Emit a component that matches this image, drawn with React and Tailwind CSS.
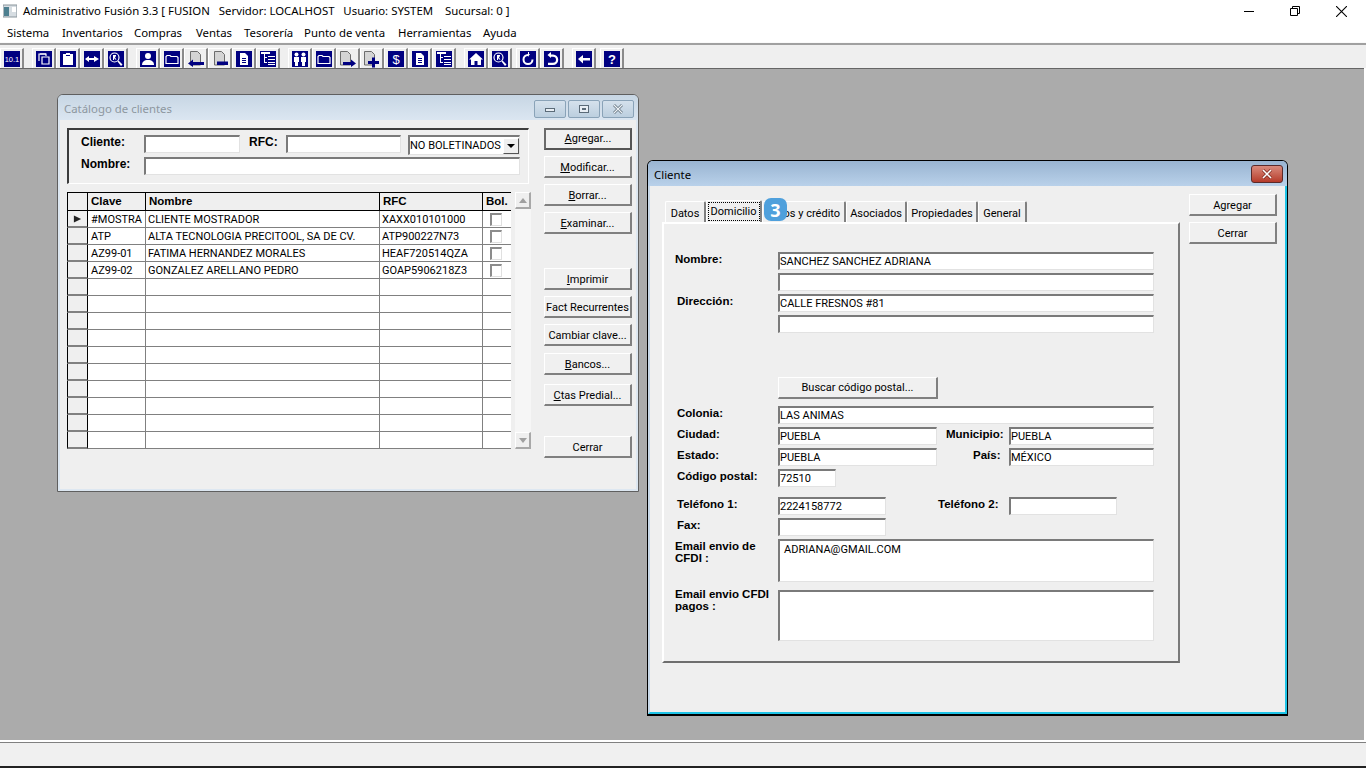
import React from "react";

const ui = "font-['Noto_Sans',sans-serif] text-[11.4px]";
const tah = "font-['Roboto',sans-serif] text-[11px] text-black";

const P = ({ children }) => (
  <svg viewBox="0 0 16 16" className="w-full h-full block overflow-visible">{children}</svg>
);
const S = { fill: "none", stroke: "#fff", strokeWidth: 1.2 };
const W = { fill: "#fff" };
const PG = { fill: "#d4d4d4", stroke: "#6c6c6c", strokeWidth: 1 };

const glyphs = {
  ten: <text x="8" y="11" textAnchor="middle" fontSize="7.500" fontFamily="Liberation Sans" fill="#fff">10.1</text>,
  copy: <P><path {...S} d="M3 10V3h7v2M6 6h7v7H6z" /><path {...S} d="M4 3h6" /></P>,
  clip: <P><path {...W} d="M3 3h3V2h4v1h3v11H3z" /><path fill="#000080" d="M6 4h4v1H6z" /></P>,
  arrows: <P><path {...W} d="M1 8l4-3v2h5V5l5 3-5 3V9H5v2z" /></P>,
  search: <P><circle {...S} cx="6.500" cy="6.500" r="4.500" /><path {...W} d="M5 4h3v1l-1 1.500 1.500 2H7L6 7v2H5zM9.500 10.500l1-1 4 4-1.500 1.500z" /></P>,
  person: <P><circle {...W} cx="8" cy="5" r="3" /><path {...W} d="M2 14c0-3 2-5 6-5s6 2 6 5z" /></P>,
  folder: <P><path {...S} d="M2 12.500V5.500l1-1h3l1 1h6l1 1v6z" /></P>,
  docL: <P><path {...PG} d="M2.500.500h7l3 3V14h-10z" /><path fill="#000080" d="M0 12.500l5-4v2.500h11v3H5V16z" /></P>,
  docM: <P><path {...PG} d="M2.500.500h7l3 3V14h-10z" /><path fill="#000080" d="M5 10.500h11v3.500H5z" /></P>,
  docR: <P><path {...PG} d="M.5.500h7l3 3V14H.5z" /><path fill="#000080" d="M16 12.500l-5-4v2.500H3v3h8V16z" /></P>,
  docP: <P><path {...PG} d="M.5.500h7l3 3V14H.5z" /><path fill="#000080" d="M8 6.500h3V10h4v3h-4v3.500H8V13H4v-3h4z" /></P>,
  doc: <P><path {...W} d="M4 2h5l3 3v9H4z" /><path fill="#000080" d="M6 7h4v1H6zM6 9h4v1H6zM6 11h4v1H6z" /></P>,
  list: <P><path {...W} d="M1 1h9v2H1zM4 3h1v9H4zM5 6h2v1H5zM5 11h2v1H5zM8 5h7v1H8zM8 8h7v1H8zM8 11h7v1H8zM8 13h7v1H8z" /></P>,
  people: <P><circle {...W} cx="4.500" cy="3.500" r="2" /><circle {...W} cx="11.500" cy="3.500" r="2" /><path {...W} d="M2 6h5v5H6v4H3v-4H2zM9 6h5v5h-1v4h-3v-4H9z" /></P>,
  dollar: <text x="8" y="13" textAnchor="middle" fontSize="13" fontFamily="Liberation Sans" fill="#fff">$</text>,
  home: <P><path {...W} d="M8 2l7 6.500h-2V14H9.500v-4h-3v4H3V8.500H1z" /></P>,
  redo: <P><path {...W} d="M8 1l1 0v2h1L8 6V5a3.500 3.500 0 1 0 3.500 3.500H13.500A5.500 5.500 0 1 1 8 3z" /></P>,
  undo: <P><path {...W} d="M7 1v6L3.500 4zM7 3.500h2a5 5 0 0 1 0 10.500H4v-2.200h5a2.900 2.900 0 0 0 0-6H7z" /></P>,
  back: <P><path {...W} d="M2 8l5-4v3h7v2.500H7v3z" /></P>,
  help: <text x="8" y="13" textAnchor="middle" fontSize="13" fontWeight="700" fontFamily="Liberation Sans" fill="#fff">?</text>,
};

const wrapSvg = (k) =>
  k === "ten" || k === "dollar" || k === "help" ? (
    <svg viewBox="0 0 16 16" className="w-full h-full block">{glyphs[k]}</svg>
  ) : (
    glyphs[k]
  );

const light = new Set(["docL", "docM", "docR", "docP"]);

function Tool({ k }) {
  return (
    <div className="w-6 h-[22px] flex items-center justify-center bg-[#efefef] border-t border-l border-white border-r-2 border-b-2 border-r-[#8a8a8a] border-b-[#8a8a8a]">
      <div className={`w-[16px] h-[16px] ${light.has(k) ? "" : "bg-[#000080]"}`}>{wrapSvg(k)}</div>
    </div>
  );
}

const toolbar = [
  ["ten"],
  ["copy", "clip", "arrows", "search"],
  ["person", "folder", "docL", "docM", "doc", "list"],
  ["people", "folder", "docR", "docP", "dollar", "doc", "list"],
  ["home", "search"],
  ["redo", "undo"],
  ["back"],
  ["help"],
];
const gaps = ["", "ml-2", "ml-2", "ml-2", "ml-2", "ml-1", "ml-2", "ml-1"];

const menus = [
  ["Sistema", "w-[55px]"],
  ["Inventarios", "w-[72px]"],
  ["Compras", "w-[62px]"],
  ["Ventas", "w-[48px]"],
  ["Tesorería", "w-[60px]"],
  ["Punto de venta", "w-[94px]"],
  ["Herramientas", "w-[85px]"],
  ["Ayuda", "w-[40px]"],
];

function Btn({ children, cls = "", def = false }) {
  const frame = def
    ? "border-2 border-t-[#6a6a6a] border-l-[#6a6a6a] border-r-[#555] border-b-[#555]"
    : "border-t border-l border-white border-r-2 border-b-2 border-r-[#808080] border-b-[#808080] pt-[3px]";
  return (
    <div className={`w-[88px] h-[22px] shrink-0 flex items-center justify-center bg-[#f0f0f0] ${frame} ${tah} ${cls}`}>
      {children}
    </div>
  );
}

function Field({ w, h = "h-[18px]", children, cls = "" }) {
  return (
    <div className={`${w} ${h} shrink-0 bg-white border-t-2 border-l-2 border-[#7a7a7a] border-r border-b border-r-[#e2e2e2] border-b-[#e2e2e2] overflow-hidden whitespace-nowrap ${tah} leading-[16px] ${cls}`}>
      {children}
    </div>
  );
}

const B = ({ children, cls = "" }) => (
  <div className={`font-['Liberation_Sans',sans-serif] font-bold text-[11.5px] text-black leading-[12px] ${cls}`}>{children}</div>
);

const rows = [
  ["#MOSTRA", "CLIENTE MOSTRADOR", "XAXX010101000"],
  ["ATP", "ALTA TECNOLOGIA PRECITOOL, SA DE CV.", "ATP900227N73"],
  ["AZ99-01", "FATIMA HERNANDEZ MORALES", "HEAF720514QZA"],
  ["AZ99-02", "GONZALEZ ARELLANO PEDRO", "GOAP5906218Z3"],
  ...Array(10).fill(["", "", ""]),
];

function Grid() {
  const hcell = "h-[19px] border-t border-black border-b bg-[#efefef] pl-[3px] font-['Liberation_Sans',sans-serif] font-bold text-[11.5px] leading-[17px] text-black";
  const cell = `bg-white border-r border-b border-[#808080] pt-px leading-[15px] overflow-hidden whitespace-nowrap ${tah}`;
  return (
    <div className="w-[444px] h-[257px] overflow-hidden">
      <div className="flex">
        <div className={`${hcell} w-[21px] border-l border-r`} />
        <div className={`${hcell} w-[58px] border-r`}>Clave</div>
        <div className={`${hcell} w-[234px] border-r`}>Nombre</div>
        <div className={`${hcell} w-[103px] border-r`}>RFC</div>
        <div className={`${hcell} w-[28px]`}>Bol.</div>
      </div>
      {rows.map((r, i) => (
        <div key={i} className="flex h-[17px]">
          <div className="w-[21px] h-[17px] bg-[#efefef] border-l border-l-black border-r border-r-black border-b-2 border-b-[#808080] flex items-center justify-center">
            {i === 0 && (
              <svg viewBox="0 0 10 8" className="w-[9px] h-[8px]"><path d="M1 0l8 4-8 4z" fill="#222" /></svg>
            )}
          </div>
          <div className={`w-[58px] pl-[3px] ${cell}`}>{r[0]}</div>
          <div className={`w-[234px] pl-[2px] ${cell}`}>{r[1]}</div>
          <div className={`w-[103px] pl-[2px] ${cell}`}>{r[2]}</div>
          <div className="w-[28px] bg-white border-b border-[#808080] flex items-center pl-[7px]">
            {r[0] && <div className="w-[12px] h-[13px] bg-white border-t-2 border-l-2 border-[#8c8c8c] border-r border-b border-r-[#e0e0e0] border-b-[#e0e0e0]" />}
          </div>
        </div>
      ))}
    </div>
  );
}

function Scroll() {
  const b = "w-[16px] h-[17px] bg-[#efefef] border-t border-l border-white border-r-2 border-b-2 border-r-[#a8a8a8] border-b-[#a8a8a8] flex items-center justify-center";
  return (
    <div className="ml-[4px] w-[16px] h-[257px] flex flex-col bg-[#f6f6f6]">
      <div className={b}><svg viewBox="0 0 8 5" className="w-[8px] h-[5px]"><path d="M4 0l4 5H0z" fill="#a0a0a0" /></svg></div>
      <div className="flex-1" />
      <div className={b}><svg viewBox="0 0 8 5" className="w-[8px] h-[5px]"><path d="M4 5l4-5H0z" fill="#a0a0a0" /></svg></div>
    </div>
  );
}

const Ul = ({ children }) => <span className="underline">{children}</span>;

function Catalogo() {
  return (
    <div className="absolute left-[57px] top-[25px] w-[582px] h-[398px] rounded-t-[6px] border border-[#5f5f5f] bg-[#dde7f1] flex flex-col">
      <div className="h-[25px] shrink-0 rounded-t-[5px] bg-gradient-to-b from-[#c7d6e4] to-[#dbe6f1] flex items-center pl-[6px] pr-[4px]">
        <div className={`${ui} mt-[2px] text-[#8d979f]`}>Catálogo de clientes</div>
        <div className="ml-auto flex gap-[2px] mt-[2px]">
          {["min", "max", "x"].map((k) => (
            <div key={k} className="w-[32px] h-[18px] rounded-[2px] border border-[#8aa3b8] bg-gradient-to-b from-[#d5e1ec] to-[#bccfdf] flex items-center justify-center">
              {k === "min" && <div className="w-[10px] h-[4px] mt-[3px] bg-[#e8eef4] border border-[#5b6b78]" />}
              {k === "max" && <div className="w-[10px] h-[8px] bg-[#e8eef4] border border-[#5b6b78] flex items-center justify-center"><div className="w-[4px] h-[2px] border border-[#5b6b78]" /></div>}
              {k === "x" && <svg viewBox="0 0 12 10" className="w-[12px] h-[10px]"><path d="M2 1l8 8M10 1l-8 8" stroke="#5b6b78" strokeWidth="2.600" /><path d="M2 1l8 8M10 1l-8 8" stroke="#eef3f7" strokeWidth="1.200" /></svg>}
            </div>
          ))}
        </div>
      </div>
      <div className="flex-1 mx-[2px] mb-[2px] bg-[#efefef] pt-[8px] pl-[7px] flex">
        <div className="w-[464px] shrink-0">
          <div className="w-[462px] h-[56px] border-t-2 border-l-2 border-[#3c3c3c] border-r border-b border-r-[#fff] border-b-[#fff]">
            <div className="flex items-start pt-[5px]">
              <B cls="ml-[12px] w-[63px] pt-[1px] !text-[12px]">Cliente:</B>
              <Field w="w-[96px]" />
              <B cls="ml-[9px] w-[37px] pt-[1px] !text-[12px]">RFC:</B>
              <Field w="w-[115px]" />
              <div className={`ml-[7px] w-[112px] h-[20px] bg-white border-t-2 border-l-2 border-[#7a7a7a] border-r border-b border-r-[#e2e2e2] border-b-[#e2e2e2] flex items-center ${tah} overflow-hidden`}>
                <span className="whitespace-nowrap pt-px">NO BOLETINADOS</span>
                <div className="ml-auto w-[16px] h-[16px] shrink-0 bg-[#efefef] border-t border-l border-white border-r border-b border-r-[#555] border-b-[#555] flex items-center justify-center">
                  <svg viewBox="0 0 8 4" className="w-[8px] h-[4px]"><path d="M0 0h8L4 4z" fill="#000" /></svg>
                </div>
              </div>
            </div>
            <div className="flex items-start mt-[2px]">
              <B cls="ml-[12px] w-[63px] pt-[1px] !text-[12px]">Nombre:</B>
              <Field w="w-[376px]" />
            </div>
          </div>
          <div className="mt-[8px] flex w-[470px]">
            <Grid />
            <Scroll />
          </div>
        </div>
        <div className="ml-[13px] flex flex-col">
          <Btn def><Ul>A</Ul>gregar...</Btn>
          <Btn cls="mt-[6px]"><Ul>M</Ul>odificar...</Btn>
          <Btn cls="mt-[6px]"><Ul>B</Ul>orrar...</Btn>
          <Btn cls="mt-[6px]"><Ul>E</Ul>xaminar...</Btn>
          <Btn cls="mt-[34px]"><Ul>I</Ul>mprimir</Btn>
          <Btn cls="mt-[6px]">Fact Recurrentes</Btn>
          <Btn cls="mt-[6px]">Cambiar clave...</Btn>
          <Btn cls="mt-[7px]"><Ul>B</Ul>ancos...</Btn>
          <Btn cls="mt-[9px]"><Ul>C</Ul>tas Predial...</Btn>
          <Btn cls="mt-[30px]">Cerrar</Btn>
        </div>
      </div>
    </div>
  );
}

const tabs = [
  ["Datos", "w-[41px]"],
  ["Domicilio", "w-[56px]"],
  ["Datos y crédito", "w-[84px]"],
  ["Asociados", "w-[61px]"],
  ["Propiedades", "w-[71px]"],
  ["General", "w-[49px]"],
];

function Tabs() {
  return (
    <div className="flex h-[23px] ml-[3px] items-end relative">
      {tabs.map(([t, w], i) => (
        <div key={t} className={`${w} shrink-0 flex items-center justify-center bg-[#efefef] border-t border-l border-white border-r-2 border-r-[#808080] rounded-t-[2px] ${tah} ${i === 1 ? "h-[22px]" : "h-[21px] pt-[4px]"}`}>
          {i === 1 ? (
            <span className="w-[52px] text-center border border-dotted border-black leading-[17px] whitespace-nowrap">{t}</span>
          ) : (
            <span className="whitespace-nowrap">{t}</span>
          )}
        </div>
      ))}
      <div className="absolute left-[99px] -top-[1px] w-[23px] h-[23px] rounded-[7px] bg-[#4fa0dc] flex items-center justify-center font-['Noto_Sans',sans-serif] text-white font-bold text-[18px] leading-none">3</div>
    </div>
  );
}

const Row = ({ cls = "", children }) => <div className={`flex items-start ${cls}`}>{children}</div>;
const Lab = ({ w = "w-[115px]", ml = "ml-[14px]", children, cls = "" }) => (
  <B cls={`${w} ${ml} shrink-0 ${cls}`}>{children}</B>
);

function Domicilio() {
  return (
    <div className="w-[518px] h-[441px] border-t-2 border-l-2 border-white border-r-2 border-b-2 border-r-[#7a7a7a] border-b-[#6e6e6e] bg-[#efefef] pt-[28px]">
      <Row>
        <Lab ml="ml-[11px]" w="w-[103px]" cls="pt-[1px]">Nombre:</Lab>
        <div className="flex flex-col gap-[3px]">
          <Field w="w-[376px]">SANCHEZ SANCHEZ ADRIANA</Field>
          <Field w="w-[376px]" />
        </div>
      </Row>
      <Row cls="mt-[3px]">
        <Lab ml="ml-[13px]" w="w-[101px]" cls="pt-[1px]">Dirección:</Lab>
        <div className="flex flex-col gap-[3px]">
          <Field w="w-[376px]">CALLE FRESNOS #81</Field>
          <Field w="w-[376px]" />
        </div>
      </Row>
      <Row cls="mt-[44px] ml-[114px]">
        <div className={`w-[160px] h-[22px] pt-[2px] flex items-center justify-center bg-[#f0f0f0] border-t border-l border-white border-r-2 border-b-2 border-r-[#808080] border-b-[#808080] ${tah}`}>Buscar código postal...</div>
      </Row>
      <Row cls="mt-[7px]">
        <Lab ml="ml-[13px]" w="w-[101px]" cls="pt-px">Colonia:</Lab>
        <Field w="w-[376px]">LAS ANIMAS</Field>
      </Row>
      <Row cls="mt-[3px]">
        <Lab ml="ml-[13px]" w="w-[101px]" cls="pt-px">Ciudad:</Lab>
        <Field w="w-[159px]">PUEBLA</Field>
        <B cls="ml-[9px] w-[63px] shrink-0 pt-px">Municipio:</B>
        <Field w="w-[145px]">PUEBLA</Field>
      </Row>
      <Row cls="mt-[3px]">
        <Lab ml="ml-[13px]" w="w-[101px]" cls="pt-px">Estado:</Lab>
        <Field w="w-[159px]">PUEBLA</Field>
        <B cls="ml-[36px] w-[36px] shrink-0 pt-px">País:</B>
        <Field w="w-[145px]">MÉXICO</Field>
      </Row>
      <Row cls="mt-[3px]">
        <Lab ml="ml-[13px]" w="w-[101px]" cls="pt-px">Código postal:</Lab>
        <Field w="w-[58px]">72510</Field>
      </Row>
      <Row cls="mt-[10px]">
        <Lab ml="ml-[13px]" w="w-[101px]" cls="pt-[1px]">Teléfono 1:</Lab>
        <Field w="w-[108px]">2224158772</Field>
        <B cls="ml-[52px] w-[71px] shrink-0 pt-[1px]">Teléfono 2:</B>
        <Field w="w-[108px]" />
      </Row>
      <Row cls="mt-[3px]">
        <Lab ml="ml-[13px]" w="w-[101px]" cls="pt-[1px]">Fax:</Lab>
        <Field w="w-[108px]" />
      </Row>
      <Row cls="mt-[3px]">
        <Lab ml="ml-[11px]" w="w-[103px]" cls="pt-[1px]">Email envio de<br />CFDI :</Lab>
        <Field w="w-[376px]" h="h-[43px]" cls="pl-[4px] pt-[1px]">ADRIANA@GMAIL.COM</Field>
      </Row>
      <Row cls="mt-[8px]">
        <Lab ml="ml-[11px]" w="w-[103px]" cls="-mt-[2px]">Email envio CFDI<br />pagos :</Lab>
        <Field w="w-[376px]" h="h-[51px]" />
      </Row>
    </div>
  );
}

function Cliente() {
  return (
    <div className="absolute left-[647px] top-[91px] w-[641px] h-[556px] rounded-t-[6px] border border-black bg-[#a9c6e3] flex flex-col border-b-2">
      <div className="h-[25px] shrink-0 rounded-t-[5px] bg-gradient-to-b from-[#99b4d1] to-[#b9d1ea] flex items-center pl-[6px] pr-[4px]">
        <div className={`${ui} mt-[2px] text-black`}>Cliente</div>
        <div className="ml-auto mt-[1px] w-[32px] h-[18px] rounded-[3px] border border-[#5a2a2a] bg-gradient-to-b from-[#d98a7c] to-[#b53a2a] flex items-center justify-center">
          <svg viewBox="0 0 12 10" className="w-[12px] h-[10px]"><path d="M2 1l8 8M10 1l-8 8" stroke="#7a2a20" strokeWidth="3" /><path d="M2 1l8 8M10 1l-8 8" stroke="#fff" strokeWidth="1.600" /></svg>
        </div>
      </div>
      <div className="flex-1 border-l-2 border-l-[#c8d8e8] border-r-2 border-r-[#1ec3e6] border-b-2 border-b-[#1ec3e6] bg-[#efefef] pl-[12px] pt-[8px] flex">
        <div className="shrink-0 mt-[5px]">
          <Tabs />
          <Domicilio />
        </div>
        <div className="ml-[9px] flex flex-col gap-[6px]">
          <Btn>Agregar</Btn>
          <Btn>Cerrar</Btn>
        </div>
      </div>
    </div>
  );
}

export default function App() {
  return (
    <div className="w-[1366px] h-[768px] overflow-hidden flex flex-col bg-white">
      <div className="h-[22px] shrink-0 flex items-center relative">
        <svg viewBox="0 0 14 14" className="w-[14px] h-[14px] ml-[3px]">
          <rect x="0" y="1" width="14" height="12" fill="#d6dde2" stroke="#8a959c" strokeWidth="1" />
          <rect x="1" y="3" width="5" height="9" fill="#4d7f8f" />
          <rect x="9" y="3" width="4" height="5" fill="#fff" />
        </svg>
        <div className={`ml-[6px] ${ui} text-black whitespace-pre`}>Administrativo Fusión 3.3 [ FUSION   Servidor: LOCALHOST   Usuario: SYSTEM    Sucursal: 0 ]</div>
        <div className="ml-auto mr-[2px] flex items-center h-full">
          <div className="w-[46px] flex justify-center"><div className="w-[10px] h-px bg-black" /></div>
          <div className="w-[46px] flex justify-center">
            <svg viewBox="0 0 10 10" className="w-[10px] h-[10px]"><path d="M.5 2.500h7v7h-7zM2.500 2.500v-2h7v7h-2" fill="none" stroke="#000" strokeWidth="1" /></svg>
          </div>
          <div className="w-[46px] flex justify-center">
            <svg viewBox="0 0 10 10" className="w-[11px] h-[11px]"><path d="M0 0l10 10M10 0L0 10" stroke="#000" strokeWidth="1" /></svg>
          </div>
        </div>
      </div>
      <div className={`h-[20px] shrink-0 flex items-center pl-[7px] pt-[2px] ${ui} text-black`}>
        {menus.map(([m, w]) => <div key={m} className={`${w} whitespace-nowrap`}>{m}</div>)}
      </div>
      <div className="h-px shrink-0 bg-[#fafafa]" />
      <div className="h-[2px] shrink-0 bg-[#a0a0a0]" />
      <div className="h-[23px] shrink-0 bg-[#efefef] flex items-start pt-[3px]">
        {toolbar.map((g, i) => (
          <div key={i} className={`flex ${gaps[i]}`}>
            {g.map((k, j) => <Tool key={j} k={k} />)}
          </div>
        ))}
      </div>
      <div className="flex-1 relative bg-[#ababab] border-t border-[#666] mr-[2px]">
        <Catalogo />
        <Cliente />
      </div>
      <div className="h-[2px] shrink-0 bg-white" />
      <div className="h-px shrink-0 bg-[#808080]" />
      <div className="h-[23px] shrink-0 bg-[#f0f0f0]" />
      <div className="h-[2px] shrink-0 bg-[#222]" />
    </div>
  );
}
